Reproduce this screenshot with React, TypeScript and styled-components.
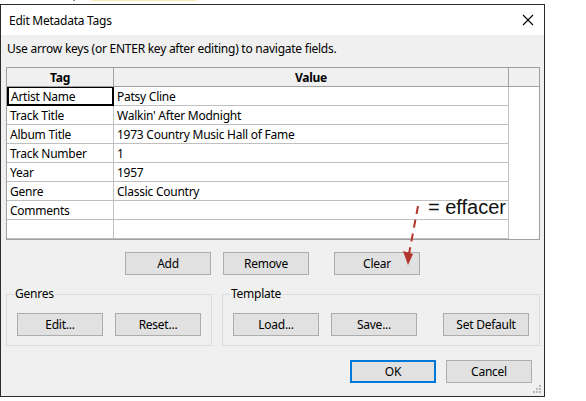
import styled, { createGlobalStyle } from "styled-components";

const GlobalStyle = createGlobalStyle`
  html, body {
    margin: 0;
    padding: 0;
    background: #ffffff;
  }
  body {
    font-family: "Noto Sans", "Liberation Sans", sans-serif;
    font-size: 12px;
    letter-spacing: -0.25px;
    color: #000;
  }
  * {
    box-sizing: border-box;
  }
`;

const rows: [string, string][] = [
  ["Artist Name", "Patsy Cline"],
  ["Track Title", "Walkin' After Modnight"],
  ["Album Title", "1973 Country Music Hall of Fame"],
  ["Track Number", "1"],
  ["Year", "1957"],
  ["Genre", "Classic Country"],
  ["Comments", ""],
  ["", ""],
];

const App = () => {
  return (
    <Page>
      <GlobalStyle />
      <TopStrip>
        <Tick />
        <Highlight />
      </TopStrip>

      <Dialog>
        <TitleBar>
          <span>Edit Metadata Tags</span>
          <CloseIcon viewBox="0 0 12 12">
            <path d="M1 1 L11 11 M11 1 L1 11" stroke="#000" strokeWidth="1.1" />
          </CloseIcon>
        </TitleBar>

        <Body>
          <Hint>Use arrow keys (or ENTER key after editing) to navigate fields.</Hint>

          <Grid>
            <HeaderRow>
              <HeadCell>Tag</HeadCell>
              <HeadCell>Value</HeadCell>
              <HeadFiller />
            </HeaderRow>
            {rows.map(([tag, value], i) => (
              <Row key={i}>
                <Cell $focused={i === 0}>{tag}</Cell>
                <Cell>{value}</Cell>
                <Filler />
              </Row>
            ))}
          </Grid>

          <ActionRow>
            <Button>Add</Button>
            <Button>Remove</Button>
            <Button $gapLeft={13}>Clear</Button>
          </ActionRow>

          <GroupRow>
            <Group $width={206}>
              <Legend>Genres</Legend>
              <GroupButtons>
                <Button>Edit...</Button>
                <Button>Reset...</Button>
              </GroupButtons>
            </Group>
            <Group>
              <Legend>Template</Legend>
              <GroupButtons>
                <Button>Load...</Button>
                <Button>Save...</Button>
                <Button $pushRight>Set Default</Button>
              </GroupButtons>
            </Group>
          </GroupRow>

          <Footer>
            <Button $primary>OK</Button>
            <Button>Cancel</Button>
          </Footer>
        </Body>

        <Grip viewBox="0 0 8 8">
          <rect x="6" y="0" width="2" height="2" fill="#b8b8b8" />
          <rect x="3" y="3" width="2" height="2" fill="#b8b8b8" />
          <rect x="6" y="3" width="2" height="2" fill="#b8b8b8" />
          <rect x="0" y="6" width="2" height="2" fill="#b8b8b8" />
          <rect x="3" y="6" width="2" height="2" fill="#b8b8b8" />
          <rect x="6" y="6" width="2" height="2" fill="#b8b8b8" />
        </Grip>
      </Dialog>

      <Note>= effacer</Note>
      <Arrow viewBox="0 0 30 70">
        <path
          d="M18 2 L9 50"
          stroke="#b3342a"
          strokeWidth="2"
          strokeDasharray="8 6"
          fill="none"
        />
        <path d="M3 47 L13 50 L8 61 Z" fill="#b3342a" />
      </Arrow>
    </Page>
  );
};

export default App;

const Page = styled.div`
  position: relative;
  width: 586px;
  height: 401px;
  overflow: hidden;
  background: #ffffff;
`;

const TopStrip = styled.div`
  display: flex;
  align-items: flex-start;
  height: 4px;
  padding-left: 73px;
`;

const Tick = styled.div`
  width: 2px;
  height: 1px;
  background: #8a8a8a;
`;

const Highlight = styled.div`
  width: 106px;
  height: 1px;
  margin-left: 16px;
  background: #fbe7b0;
`;

const Dialog = styled.div`
  position: relative;
  display: flex;
  flex-direction: column;
  width: 545px;
  height: 393px;
  border: 1px solid #2b2b2b;
  background: #f0f0f0;
`;

const TitleBar = styled.div`
  display: flex;
  align-items: center;
  justify-content: space-between;
  height: 30px;
  padding: 0 10px 0 8px;
  background: #ffffff;
  font-size: 12px;
`;

const CloseIcon = styled.svg`
  width: 12px;
  height: 12px;
`;

const Body = styled.div`
  display: flex;
  flex-direction: column;
  flex: 1;
  padding: 0 4px 0 5px;
`;

const Hint = styled.div`
  height: 16px;
  line-height: 16px;
  margin: 6px 0 10px 1px;
  white-space: nowrap;
`;

const Grid = styled.div`
  display: flex;
  flex-direction: column;
  height: 173px;
  border: 1px solid #a0a0a0;
  background: #ffffff;
`;

const HeaderRow = styled.div`
  display: grid;
  grid-template-columns: 107px 395px 1fr;
  height: 19px;
  background: #f0f0f0;
  border-bottom: 1px solid #a0a0a0;
`;

const HeadCell = styled.div`
  display: flex;
  align-items: center;
  justify-content: center;
  font-weight: 700;
  border-right: 1px solid #a0a0a0;
`;

const HeadFiller = styled.div``;

const Row = styled.div`
  display: grid;
  grid-template-columns: 107px 395px 1fr;
  height: 19px;
`;

const Cell = styled.div<{ $focused?: boolean }>`
  display: flex;
  align-items: center;
  padding-left: 3px;
  white-space: nowrap;
  overflow: hidden;
  border-right: 1px solid #c0c0c0;
  border-bottom: 1px solid #c0c0c0;
  ${(props) =>
    props.$focused &&
    `
    border: 2px solid #000;
    border-top: 1px solid #000;
    padding-left: 2px;
  `}
`;

const Filler = styled.div``;

const ActionRow = styled.div`
  display: flex;
  gap: 12px;
  margin-top: 12px;
  padding-left: 119px;
`;

const Button = styled.button<{ $primary?: boolean; $gapLeft?: number; $pushRight?: boolean }>`
  width: 86px;
  height: 23px;
  padding: 0;
  font-family: "Noto Sans", "Liberation Sans", sans-serif;
  font-size: 12px;
  letter-spacing: -0.25px;
  color: #000;
  background: #e1e1e1;
  border: 1px solid #adadad;
  border-radius: 0;
  margin-left: ${(props) => (props.$pushRight ? "auto" : `${props.$gapLeft ?? 0}px`)};
  ${(props) =>
    props.$primary &&
    `
    border: 2px solid #0078d7;
  `}
`;

const GroupRow = styled.div`
  display: flex;
  gap: 10px;
  margin-top: 11px;
`;

const Group = styled.fieldset<{ $width?: number }>`
  ${(props) => (props.$width ? `width: ${props.$width}px;` : "flex: 1;")}
  margin: 0;
  padding: 0 10px 9px 10px;
  border: 1px solid #dcdcdc;
  min-width: 0;
`;

const Legend = styled.legend`
  padding: 0 1px;
  margin-left: -3px;
  line-height: 16px;
  font-size: 12px;
`;

const GroupButtons = styled.div`
  display: flex;
  gap: 12px;
  margin-top: 11px;
`;

const Footer = styled.div`
  display: flex;
  justify-content: flex-end;
  gap: 10px;
  margin-top: 14px;
  padding-right: 8px;
`;

const Grip = styled.svg`
  position: absolute;
  right: 3px;
  bottom: 3px;
  width: 8px;
  height: 8px;
`;

const Note = styled.div`
  position: absolute;
  left: 428px;
  top: 197px;
  font-family: "Liberation Sans", Arial, sans-serif;
  font-size: 20px;
  line-height: 20px;
  letter-spacing: 0;
  color: #111;
  white-space: nowrap;
`;

const Arrow = styled.svg`
  position: absolute;
  left: 400px;
  top: 204px;
  width: 30px;
  height: 70px;
`;
